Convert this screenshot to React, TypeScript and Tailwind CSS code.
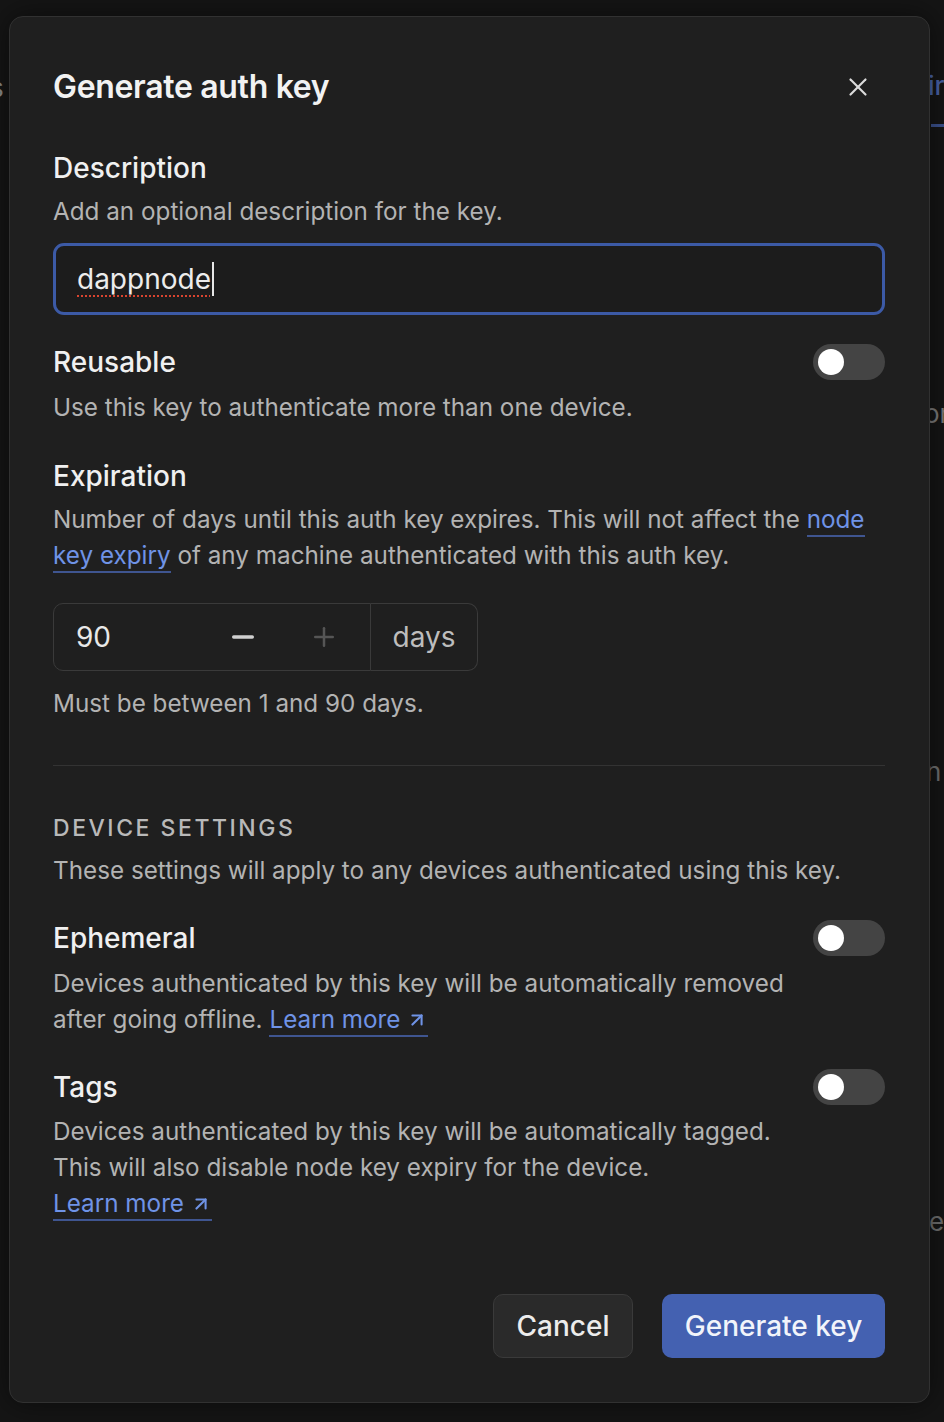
import { X, Minus, Plus, ArrowUpRight } from "lucide-react";

function Toggle() {
  return (
    <div className="flex h-[36px] w-[72px] shrink-0 items-center rounded-full bg-[#444444] px-[5px]">
      <div className="h-[26px] w-[26px] rounded-full bg-white" />
    </div>
  );
}

function Link({ children, icon = false }: { children: React.ReactNode; icon?: boolean }) {
  return (
    <a className="border-b-2 border-[#3f5590] pb-[1px] text-[#6f93e6]">
      {children}
      {icon && (
        <ArrowUpRight size={22} strokeWidth={2.25} className="ml-[6px] inline-block align-[-3px]" />
      )}
    </a>
  );
}

export default function App() {
  return (
    <div
      className="relative h-[1422px] w-[944px] overflow-hidden bg-[#151515] pl-[9px] pt-[16px]"
      style={{ fontFamily: "Inter, 'Noto Sans', sans-serif" }}
    >
      {/* page behind the dialog */}
      <span className="absolute left-[-10px] top-[68px] text-[26px] text-[#8a8a8a]">s</span>
      <span className="absolute left-[928px] top-[66px] text-[26px] font-medium text-[#4a63a8]">ir</span>
      <div className="absolute left-[931px] top-[124px] h-[3px] w-[20px] bg-[#3c528e]" />
      <span className="absolute left-[924px] top-[394px] text-[26px] text-[#7a7a7a]">or</span>
      <span className="absolute left-[926px] top-[752px] text-[26px] text-[#6f6f6f]">n</span>
      <span className="absolute left-[929px] top-[1202px] text-[26px] text-[#6f6f6f]">e</span>

      <div className="relative w-[921px] rounded-[14px] border border-[#313131] bg-[#1f1f1f] pb-[44px] pl-[43px] pr-[44px] pt-[50px] shadow-[0_0_30px_rgba(0,0,0,0.5)]">
        <div className="flex h-[40px] items-center justify-between">
          <h1 className="text-[32px] font-semibold tracking-[-0.01em] text-[#f2f2f2]">Generate auth key</h1>
          <X size={30} strokeWidth={1.75} className="mr-[12px] text-[#dcdcdc]" />
        </div>

        <div className="mt-[43px] text-[28px] font-medium leading-[36px] text-[#f0f0f0]">Description</div>
        <div className="mt-[8px] text-[24.25px] leading-[36px] text-[#b3b3b3]">Add an optional description for the key.</div>
        <div className="mt-[13px] flex h-[72px] items-center rounded-[11px] border-[3px] border-[#3c5aa6] bg-[#1c1c1c] px-[21px]">
          <span className="text-[28px] text-[#ececec] underline decoration-[#d9442f] decoration-dotted decoration-2 underline-offset-[6px]">
            dappnode
          </span>
          <span className="ml-[1px] h-[34px] w-[2px] bg-[#e6e6e6]" />
        </div>

        <div className="mt-[29px] flex items-center justify-between">
          <div className="text-[28px] font-medium leading-[36px] text-[#f0f0f0]">Reusable</div>
          <Toggle />
        </div>
        <div className="mt-[10px] text-[24.25px] leading-[36px] text-[#b3b3b3]">
          Use this key to authenticate more than one device.
        </div>

        <div className="mt-[32px] text-[28px] font-medium leading-[36px] text-[#f0f0f0]">Expiration</div>
        <div className="mt-[8px] text-[24.25px] leading-[36px] text-[#b3b3b3]">
          Number of days until this auth key expires. This will not affect the <Link>node</Link>{" "}
          <Link>key expiry</Link> of any machine authenticated with this auth key.
        </div>

        <div className="mt-[29px] flex h-[68px] w-[425px]">
          <div className="flex w-[318px] items-center rounded-l-[10px] border border-[#3a3a3a] pl-[22px] pr-[31px]">
            <span className="flex-1 text-[28px] text-[#e8e8e8]">90</span>
            <Minus size={32} strokeWidth={2.5} className="text-[#d0d0d0]" />
            <Plus size={30} strokeWidth={2} className="ml-[50px] text-[#555555]" />
          </div>
          <div className="flex flex-1 items-center justify-center rounded-r-[10px] border border-l-0 border-[#3a3a3a] text-[28px] text-[#bdbdbd]">
            days
          </div>
        </div>
        <div className="mt-[15px] text-[24.25px] leading-[36px] text-[#b3b3b3]">Must be between 1 and 90 days.</div>

        <div className="mt-[43px] h-px bg-[#333333]" />

        <div className="mt-[44px] text-[23px] font-medium uppercase leading-[36px] tracking-[0.11em] text-[#b9b9b9]">
          Device settings
        </div>
        <div className="mt-[7px] text-[24.25px] leading-[36px] text-[#b3b3b3]">
          These settings will apply to any devices authenticated using this key.
        </div>

        <div className="mt-[31px] flex items-center justify-between">
          <div className="text-[28px] font-medium leading-[36px] text-[#f0f0f0]">Ephemeral</div>
          <Toggle />
        </div>
        <div className="mt-[10px] max-w-[760px] text-[24.25px] leading-[36px] text-[#b3b3b3]">
          Devices authenticated by this key will be automatically removed after going offline.{" "}
          <Link icon>Learn more</Link>
        </div>

        <div className="mt-[31px] flex items-center justify-between">
          <div className="text-[28px] font-medium leading-[36px] text-[#f0f0f0]">Tags</div>
          <Toggle />
        </div>
        <div className="mt-[9px] max-w-[760px] text-[24.25px] leading-[36px] text-[#b3b3b3]">
          Devices authenticated by this key will be automatically tagged.
          <br />
          This will also disable node key expiry for the device.
          <br />
          <Link icon>Learn more</Link>
        </div>

        <div className="mt-[72px] flex justify-end gap-[29px]">
          <button className="h-[64px] w-[140px] rounded-[10px] border border-[#3a3a3a] bg-[#2a2a2a] text-[28px] font-medium text-[#ececec]">
            Cancel
          </button>
          <button className="h-[64px] w-[223px] rounded-[10px] bg-[#4461b1] text-[28px] font-medium text-[#f2f4fa]">
            Generate key
          </button>
        </div>
      </div>
    </div>
  );
}
